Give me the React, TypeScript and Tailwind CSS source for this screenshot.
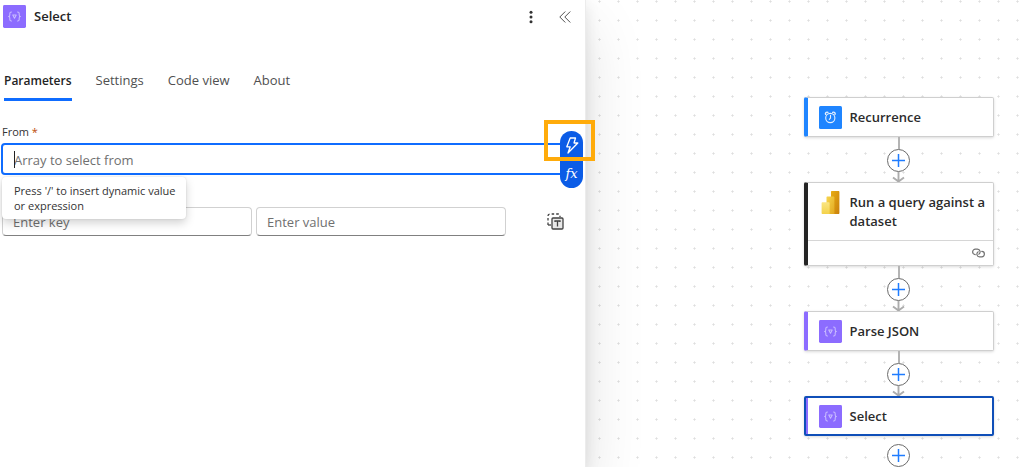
import { useState } from "react";

function BracesIcon() {
  return (
    <svg width="23" height="23" viewBox="0 0 24 24" className="shrink-0" aria-hidden="true">
      <rect width="24" height="24" rx="1.5" fill="#8c6cff" />
      <g fill="none" stroke="#c9bcff" strokeWidth="1.1" strokeLinecap="round" strokeLinejoin="round">
        <path d="M8.8 7.4c-1.3 0-1.7.5-1.7 1.5v1.5c0 .9-.4 1.5-1.3 1.6.9.1 1.3.7 1.3 1.6v1.5c0 1 .4 1.5 1.7 1.5" />
        <path d="M15.2 7.4c1.3 0 1.7.5 1.7 1.5v1.5c0 .9.4 1.5 1.3 1.6-.9.1-1.3.7-1.3 1.6v1.5c0 1-.4 1.5-1.7 1.5" />
        <path d="M10.2 10.5h3.6L12 13.8z" />
      </g>
    </svg>
  );
}

function AlarmIcon() {
  return (
    <svg width="23" height="23" viewBox="0 0 23 23" className="shrink-0" aria-hidden="true">
      <rect width="23" height="23" rx="1.5" fill="#1f85ff" />
      <g fill="none" stroke="#e4f0ff" strokeWidth="1.1" strokeLinecap="round" strokeLinejoin="round">
        <circle cx="11.300" cy="12" r="4.600" />
        <path d="M11.500 9.300v2.900l-1.200 1.200" />
        <path d="M6.600 8.300c-.7-1.300.9-2.700 2.300-1.900M16 8.300c.7-1.300-.9-2.700-2.300-1.900" strokeWidth="1.400" />
      </g>
    </svg>
  );
}

function PowerBiIcon() {
  return (
    <svg width="23" height="23" viewBox="0 0 23 23" className="shrink-0" aria-hidden="true">
      <defs>
        <linearGradient id="bar-back" x1="0" y1="0" x2="1" y2="1">
          <stop offset="0" stopColor="#e8ad14" />
          <stop offset="1" stopColor="#c9800c" />
        </linearGradient>
        <linearGradient id="bar-mid" x1="0" y1="0" x2="1" y2="1">
          <stop offset="0" stopColor="#f7d54e" />
          <stop offset="1" stopColor="#e2a81e" />
        </linearGradient>
        <linearGradient id="bar-front" x1="0" y1="0" x2="0" y2="1">
          <stop offset="0" stopColor="#fae583" />
          <stop offset="1" stopColor="#f4d24a" />
        </linearGradient>
      </defs>
      <path d="M13 0h6.4c.6 0 1 .4 1 1v21c0 .6-.4 1-1 1H12V1c0-.6.4-1 1-1z" fill="url(#bar-back)" />
      <path d="M8.500 5.600h5.900c.6 0 1 .4 1 1V23H7.500V6.600c0-.6.4-1 1-1z" fill="url(#bar-mid)" />
      <path d="M3.600 11.300h6c.6 0 1 .4 1 1V23h-7c-.6 0-1-.4-1-1v-9.700c0-.6.4-1 1-1z" fill="url(#bar-front)" />
    </svg>
  );
}

function Connector({ arrow = true }: { arrow?: boolean }) {
  return (
    <div className="flex flex-col items-center">
      <span className={arrow ? "h-3 w-[2px] bg-[#b4b4b4]" : "h-2"} />
      <button
        type="button"
        aria-label="Insert a new step"
        className="flex size-[23px] items-center justify-center rounded-full border border-[#6b6b6b] bg-white"
      >
        <svg width="15" height="15" viewBox="0 0 15 15" stroke="#1f7cff" strokeWidth="1.500" aria-hidden="true">
          <path d="M7.500 1v13M1 7.500h13" />
        </svg>
      </button>
      {arrow && (
        <svg width="13" height="10" viewBox="0 0 13 10" fill="none" stroke="#adadad" strokeWidth="1.900" aria-hidden="true">
          <path d="M6.500 0v9.500M1 5.500l5.500 4 5.500-4" />
        </svg>
      )}
    </div>
  );
}

const cardBase = "flex w-[190px] rounded-[2px] bg-white text-left shadow-[0_1px_3px_rgba(0,0,0,0.15)]";
const titleText = "text-[13px] leading-[19px] font-semibold text-[#2b2b2b]";

export default function App() {
  const [tab, setTab] = useState("Parameters");
  const [from, setFrom] = useState("");

  return (
    <main className="grid min-h-screen grid-cols-[minmax(0,586fr)_minmax(0,437fr)] overflow-hidden bg-white font-['Open_Sans','Noto_Sans',sans-serif] text-[13px] text-[#424242]">
      <section className="relative z-10 border-r border-[#ececec] bg-white shadow-[0_26px_58px_rgba(0,0,0,0.12),0_5px_14px_rgba(0,0,0,0.1)]">
        <header className="flex h-[33px] items-center pr-2 pl-[3px]">
          <BracesIcon />
          <h1 className="ml-2 flex-1 text-[13px] font-semibold text-[#242424]">Select</h1>
          <button type="button" aria-label="More commands" className="flex size-6 items-center justify-center">
            <svg width="4" height="14" viewBox="0 0 4 14" fill="#333" aria-hidden="true">
              <circle cx="2" cy="2.300" r="1.500" />
              <circle cx="2" cy="7" r="1.500" />
              <circle cx="2" cy="11.700" r="1.500" />
            </svg>
          </button>
          <button type="button" aria-label="Collapse" className="ml-[10px] flex size-6 items-center justify-center">
            <svg width="12" height="12" viewBox="0 0 12 12" fill="none" stroke="#505050" strokeLinecap="round" aria-hidden="true">
              <path d="M6 .8.800 6 6 11.200M11 .8 5.800 6l5.200 5.200" />
            </svg>
          </button>
        </header>

        <div role="tablist" className="mt-[34px] flex gap-6 px-1">
          {["Parameters", "Settings", "Code view", "About"].map((name) => (
            <button
              key={name}
              type="button"
              role="tab"
              aria-selected={tab === name}
              onClick={() => setTab(name)}
              className={
                tab === name
                  ? "h-[34px] border-b-[3px] border-[#0f6cff] pb-1 text-[12px] font-semibold text-[#242424]"
                  : "h-[34px] border-b-[3px] border-transparent pb-1 text-[#505050]"
              }
            >
              {name}
            </button>
          ))}
        </div>

        <div className="pt-[23px]">
          <label htmlFor="from" className="block pl-[2px] text-[11px] leading-4 text-[#333]">
            From <span className="text-[#bc4b09]">*</span>
          </label>
          <div className="relative mt-[3px] mr-[10px] ml-px">
            <input
              id="from"
              value={from}
              onChange={(e) => setFrom(e.target.value)}
              placeholder="Array to select from"
              className="block h-8 w-full rounded-[4px] border-2 border-[#0f6cff] bg-white pt-px pl-[11px] outline-none placeholder:text-[#707070]"
            />
            <span className="absolute top-2 left-[13px] h-[17px] w-px bg-[#222]" />
            <div className="absolute top-[-12px] right-[-8px] flex h-[57px] w-[23px] flex-col rounded-full bg-[#0b5ce6] text-white">
              <button type="button" aria-label="Dynamic content" className="flex flex-1 items-center justify-center">
                <svg width="14" height="17" viewBox="0 0 14 17" fill="none" stroke="#fff" strokeWidth="1.300" strokeLinejoin="round" aria-hidden="true">
                  <path d="M5.200 1h5.300L9 6h3.800L3 16l2.200-6.200H1.800z" />
                </svg>
              </button>
              <button type="button" aria-label="Expression" className="flex-1 font-['DejaVu_Serif','Liberation_Serif',serif] text-[13px] leading-none italic">
                fx
              </button>
            </div>
            <span className="pointer-events-none absolute top-[-23px] right-[-20px] h-[41px] w-[51px] border-4 border-[#ffab0a]" />
            <div
              role="tooltip"
              className="absolute top-[34px] left-px w-[184px] rounded-[4px] bg-white py-[6px] pr-1 pl-3 text-[11px] leading-[15px] text-[#333] shadow-[0_4px_10px_rgba(0,0,0,0.18),0_0_2px_rgba(0,0,0,0.12)]"
            >
              Press '/' to insert dynamic value
              <br />
              or expression
            </div>
          </div>
          <div className="mt-8 flex items-center pl-[2px]">
            <input
              aria-label="Key"
              placeholder="Enter key"
              className="h-[29px] min-w-0 flex-1 rounded-[4px] border border-[#d1d1d1] border-b-[#808080] px-[10px] outline-none placeholder:text-[#707070]"
            />
            <input
              aria-label="Value"
              placeholder="Enter value"
              className="ml-1 h-[29px] min-w-0 flex-1 rounded-[4px] border border-[#d1d1d1] border-b-[#808080] px-[10px] outline-none placeholder:text-[#707070]"
            />
            <button type="button" aria-label="Switch to text mode" className="mr-[21px] ml-[41px]">
              <svg width="17" height="17" viewBox="0 0 17 17" fill="none" stroke="#424242" strokeWidth="1.300" aria-hidden="true">
                <path d="M1 12V3q0-2 2-2h8q2 0 2 2v1" strokeDasharray="2.500 2" />
                <path d="M1 12h3" />
                <rect x="5" y="5" width="11" height="11" rx="1" fill="#e8e8e8" />
                <path d="M8 9V8h5v1M10.500 8v5.500" />
              </svg>
            </button>
          </div>
        </div>
      </section>

      <section
        aria-label="Workflow designer"
        className="flex flex-col items-center bg-[radial-gradient(circle,#dedede_0.8px,transparent_1.4px)] bg-[size:19px_19px] bg-[position:4px_-8px] pt-[97px] pl-[188px]"
      >
        <div className={`${cardBase} h-10 items-center border border-l-4 border-[#cfcfcf] border-l-[#1f85ff] pl-[11px]`}>
          <AlarmIcon />
          <span className={`${titleText} ml-2`}>Recurrence</span>
        </div>
        <Connector />
        <div className={`${cardBase} flex-col border border-l-4 border-[#cfcfcf] border-l-[#242424]`}>
          <div className="flex h-[57px] items-start pt-2 pl-[11px]">
            <PowerBiIcon />
            <span className={`${titleText} ml-2 pt-[2px]`}>Run a query against a dataset</span>
          </div>
          <div className="flex h-[25px] items-center justify-end border-t border-[#d6d6d6] pr-2">
            <svg width="13" height="10" viewBox="0 0 13 10" fill="none" stroke="#707070" strokeWidth="1.200" strokeLinecap="round" aria-hidden="true">
              <path d="M3.200 6.600A2.700 2.700 0 0 1 3.500 1.200h2a2.700 2.700 0 0 1 1.300 5" />
              <path d="M9.800 3.400a2.700 2.700 0 0 1-.3 5.400h-2a2.700 2.700 0 0 1-1.300-5" />
            </svg>
          </div>
        </div>
        <Connector />
        <div className={`${cardBase} h-10 items-center border border-l-4 border-[#cfcfcf] border-l-[#8c6cff] pl-[11px]`}>
          <BracesIcon />
          <span className={`${titleText} ml-2`}>Parse JSON</span>
        </div>
        <Connector />
        <div className={`${cardBase} h-10 border-2 border-[#0f4fb8]`}>
          <div className="flex flex-1 items-center border-l-2 border-[#8c6cff] pl-[11px]">
            <BracesIcon />
            <span className={`${titleText} ml-2`}>Select</span>
          </div>
        </div>
        <Connector arrow={false} />
      </section>
    </main>
  );
}
